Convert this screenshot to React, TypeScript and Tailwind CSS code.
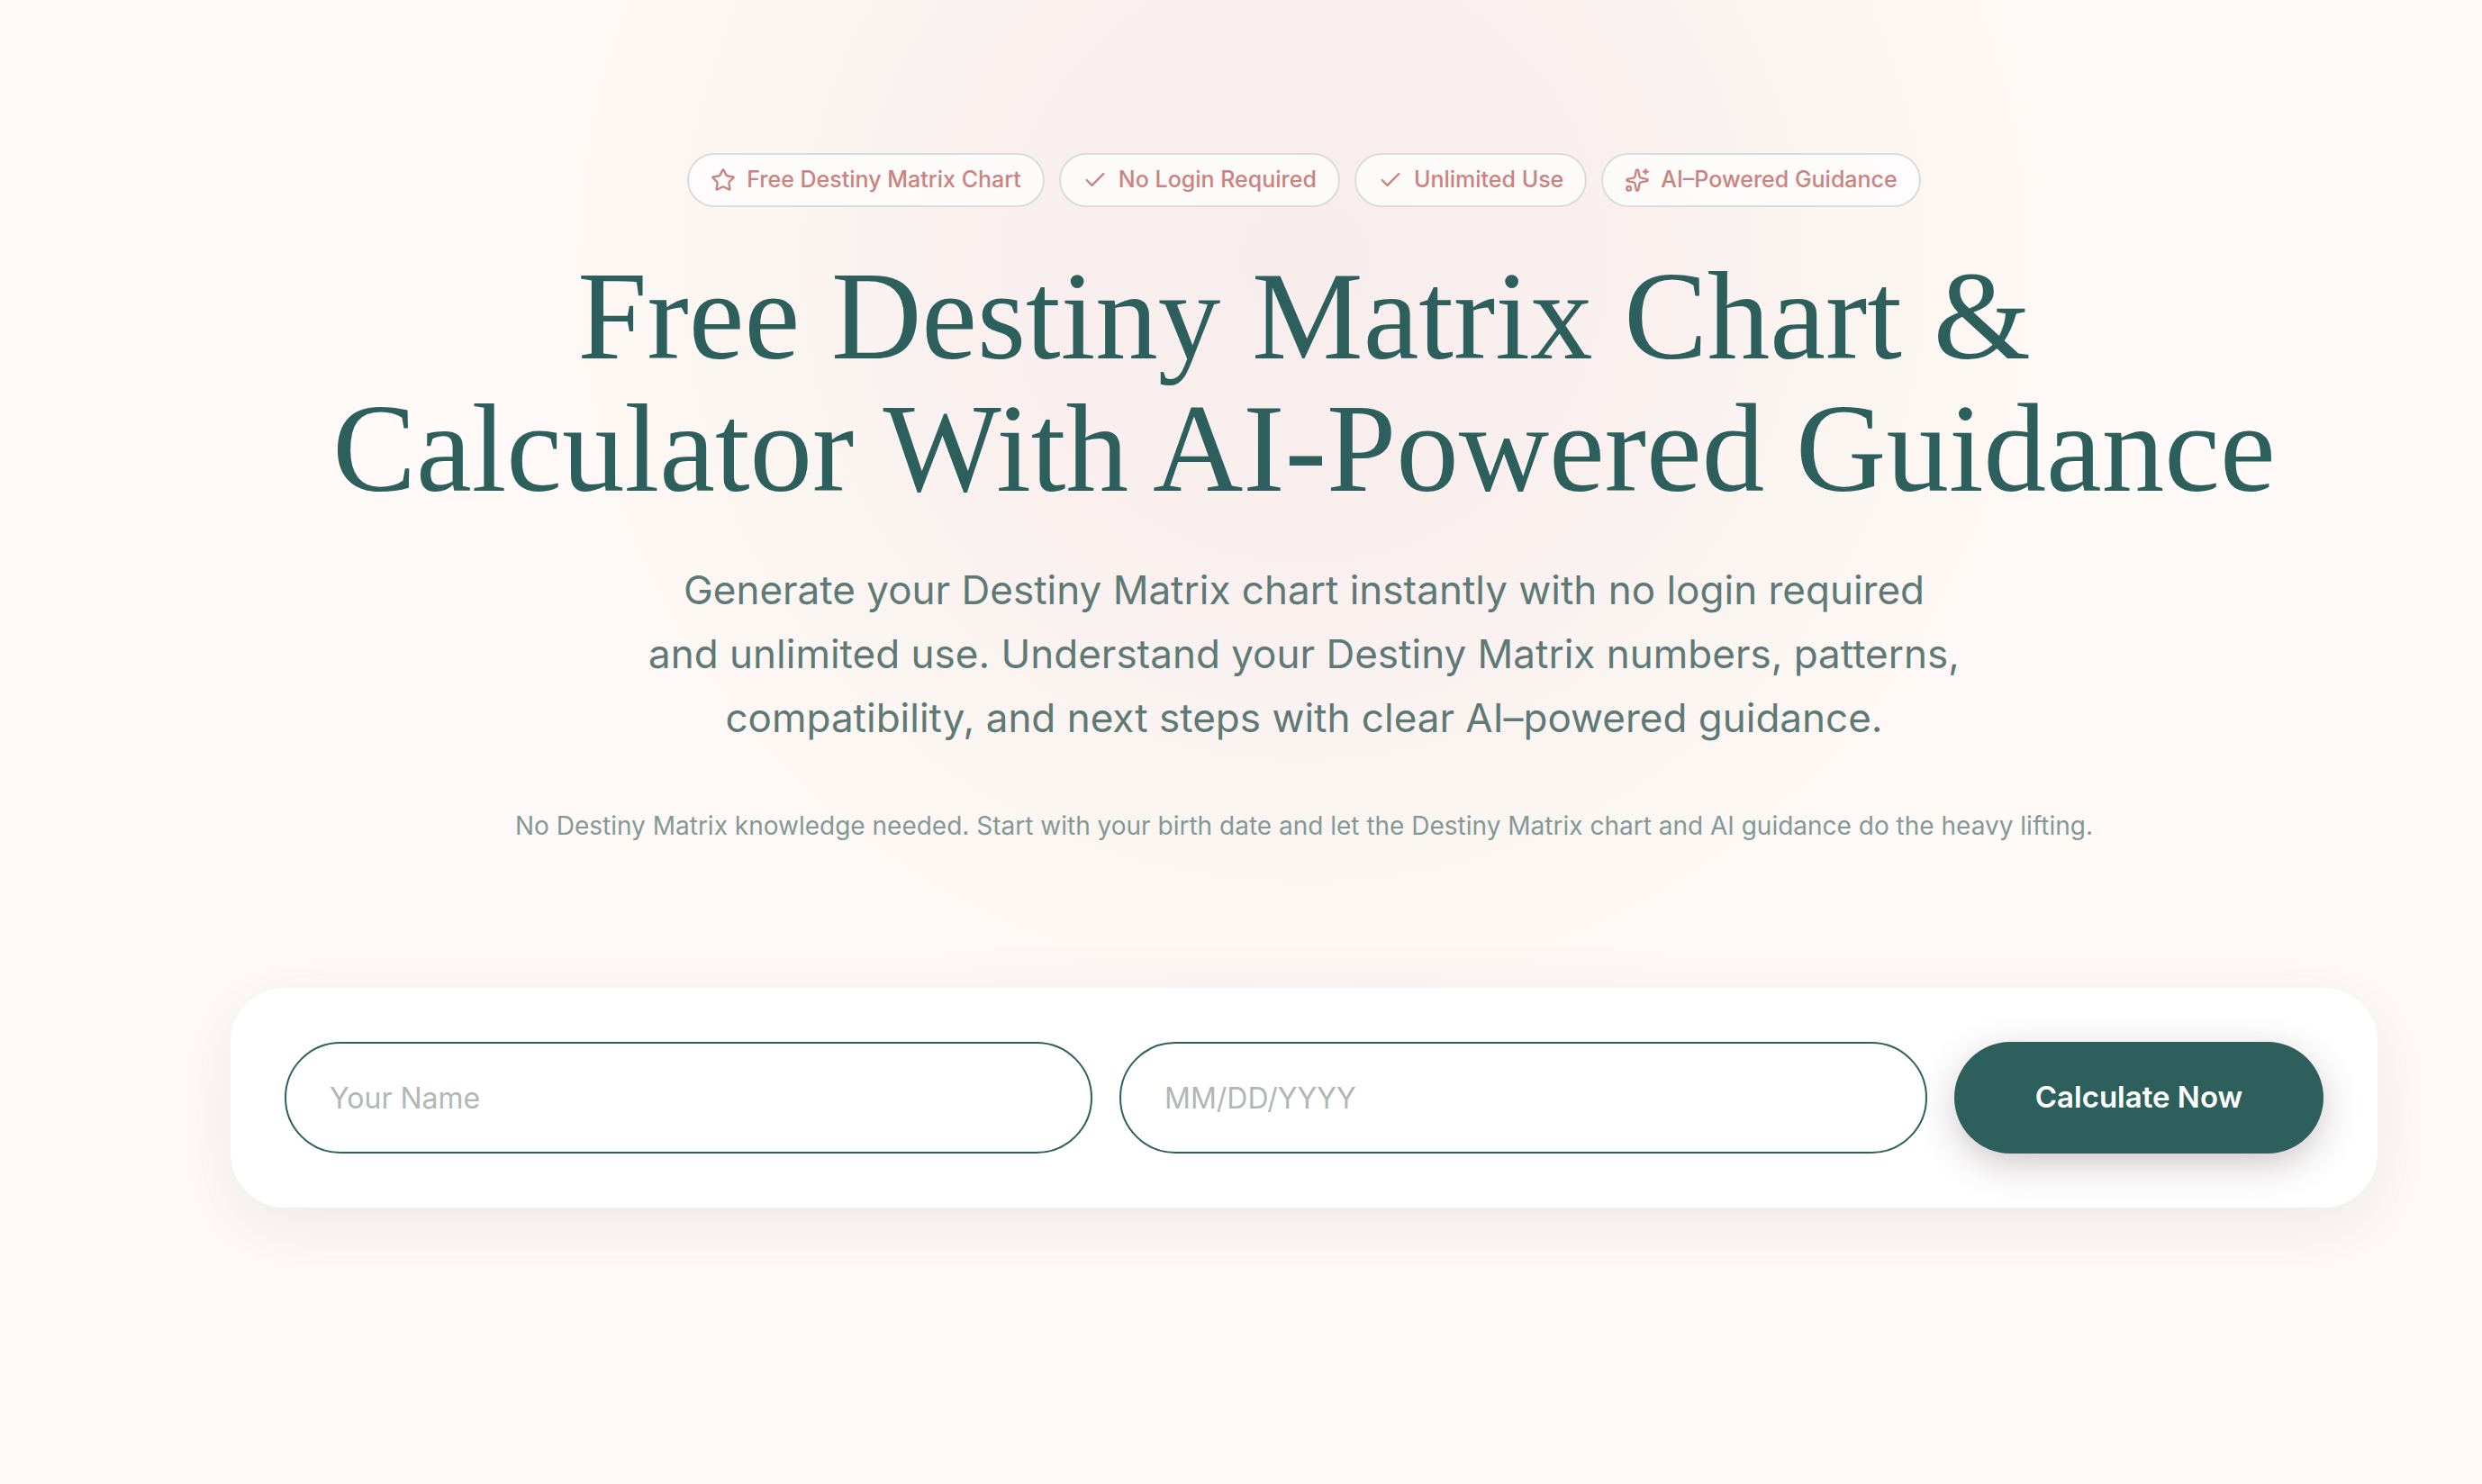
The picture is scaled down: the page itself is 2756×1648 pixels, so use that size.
import { useState, type FormEvent } from 'react'
import { Check, Sparkles, Star, type LucideIcon } from 'lucide-react'

interface Badge {
  icon: LucideIcon
  label: string
}

const badges: Badge[] = [
  { icon: Star, label: 'Free Destiny Matrix Chart' },
  { icon: Check, label: 'No Login Required' },
  { icon: Check, label: 'Unlimited Use' },
  { icon: Sparkles, label: 'AI–Powered Guidance' },
]

const field =
  'h-[124px] min-w-0 flex-1 rounded-full border-2 border-[#2d5f5d] bg-white px-12 text-[32px] text-[#2d5f5d] placeholder:text-[#b0b8b5] focus:outline-none'

function Badges() {
  return (
    <ul className="flex flex-wrap justify-center gap-4">
      {badges.map(({ icon: Icon, label }) => (
        <li
          key={label}
          className="flex h-[60px] items-center gap-3 rounded-full border-2 border-[#dfdada] bg-white/70 px-6 text-[25px] font-medium text-[#cb837f]"
        >
          <Icon size={28} strokeWidth={2} aria-hidden="true" />
          {label}
        </li>
      ))}
    </ul>
  )
}

function BirthForm() {
  const [name, setName] = useState('')
  const [date, setDate] = useState('')

  function handleSubmit(e: FormEvent) {
    e.preventDefault()
  }

  return (
    <form
      onSubmit={handleSubmit}
      className="flex w-full items-center gap-[30px] rounded-[60px] bg-white p-[60px] shadow-[0_20px_80px_rgba(45,60,80,0.09)]"
    >
      <input
        type="text"
        aria-label="Your Name"
        placeholder="Your Name"
        value={name}
        onChange={e => setName(e.target.value)}
        className={field}
      />
      <input
        type="text"
        aria-label="Birth date"
        placeholder="MM/DD/YYYY"
        value={date}
        onChange={e => setDate(e.target.value)}
        className={field}
      />
      <button
        type="submit"
        className="h-[124px] w-[410px] shrink-0 rounded-full bg-[#2d5f5d] text-[33px] font-semibold text-white shadow-[0_12px_40px_rgba(60,30,30,0.24)]"
      >
        Calculate Now
      </button>
    </form>
  )
}

export default function App() {
  return (
    <main className="relative isolate min-h-screen overflow-hidden bg-[#fffaf7] pt-[170px] pr-[116px] pb-[300px] pl-64 font-['Inter','Noto_Sans',sans-serif]">
      {/* soft pink glow behind the headline */}
      <div className="absolute top-0 right-[116px] left-64 -z-10 h-[1240px] bg-[radial-gradient(circle_920px_at_50%_290px,#f8eded_0%,#f9efee_35%,#fbf5f2_65%,#fffaf7_100%)]" />
      <section className="flex flex-col items-center text-center">
        <Badges />
        <h1 className="mt-12 font-['Liberation_Serif',serif] text-[139px] leading-[147px] text-[#2d5f5d]">
          Free Destiny Matrix Chart &amp;
          <br />
          Calculator With AI-Powered Guidance
        </h1>
        <p className="mt-12 text-[44px] leading-[71px] text-[#5f7a76]">
          Generate your Destiny Matrix chart instantly with no login required
          <br />
          and unlimited use. Understand your Destiny Matrix numbers, patterns,
          <br />
          compatibility, and next steps with clear AI–powered guidance.
        </p>
        <p className="mt-[62px] mb-[158px] text-[28px] leading-[44px] text-[#839995]">
          No Destiny Matrix knowledge needed. Start with your birth date and let the Destiny Matrix chart and AI guidance do the heavy lifting.
        </p>
        <BirthForm />
      </section>
    </main>
  )
}
